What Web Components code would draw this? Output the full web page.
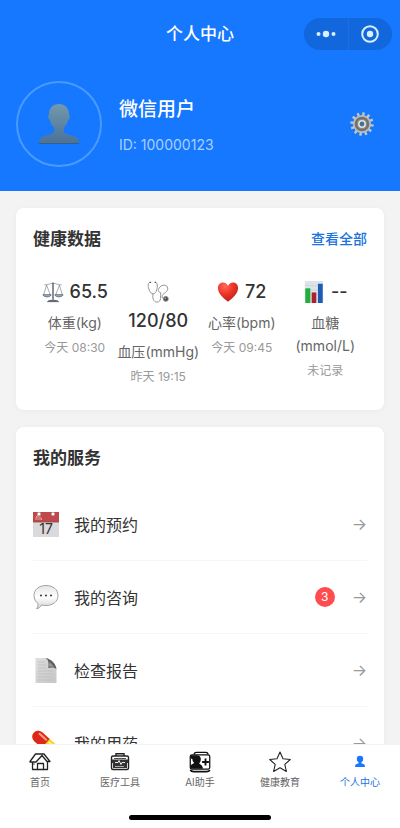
<!DOCTYPE html>
<html lang="zh-CN">
<head>
<meta charset="utf-8">
<meta name="viewport" content="width=device-width, initial-scale=1">
<title>个人中心</title>
<style>
  :root {
    --blue: #1677ff;
    --ink: #333;
    --ink-2: #666;
    --ink-3: #999;
    --line: #f5f5f5;
  }
  html, body { margin: 0; height: 100%; }
  body { font-family: Inter, "Noto Sans CJK SC", sans-serif; color: var(--ink); background: #f3f3f4; }
</style>
</head>
<body>
<profile-page>
  <nav-bar slot="top">个人中心</nav-bar>
  <user-header slot="top" uid="100000123">微信用户</user-header>

  <info-card heading="健康数据" more="查看全部">
    <metric-grid>
      <metric-item icon="scale" value="65.5" label="体重(kg)" time="今天 08:30"></metric-item>
      <metric-item icon="stethoscope" value="120/80" label="血压(mmHg)" time="昨天 19:15"></metric-item>
      <metric-item icon="heart" value="72" label="心率(bpm)" time="今天 09:45"></metric-item>
      <metric-item icon="chart" value="--" label="血糖(mmol/L)" time="未记录"></metric-item>
    </metric-grid>
  </info-card>

  <info-card heading="我的服务">
    <service-row icon="calendar">我的预约</service-row>
    <service-row icon="bubble" count="3">我的咨询</service-row>
    <service-row icon="report">检查报告</service-row>
    <service-row icon="pill">我的用药</service-row>
  </info-card>

  <tab-bar slot="bottom">
    <tab-item icon="home">首页</tab-item>
    <tab-item icon="kit">医疗工具</tab-item>
    <tab-item icon="assistant">AI助手</tab-item>
    <tab-item icon="star">健康教育</tab-item>
    <tab-item icon="person" current>个人中心</tab-item>
  </tab-bar>
</profile-page>

<script>
const ICONS = {
  avatar: `<svg viewBox="0 0 40 40"><defs><linearGradient id="g" x1="0" y1="0" x2="0" y2="1"><stop offset="0" stop-color="#7299ad"/><stop offset="1" stop-color="#4a7198"/></linearGradient></defs>
    <path fill="url(#g)" d="M20 0c-6 0-10 4-10 10 0 1-1 1-.8 3 .2 1.700 1 2.500 1.800 3 .6 3.500 2.200 6 4.200 7.500v4.200c-1.200 2.300-4 2.800-7.200 3.500C3.500 32.300 0 34 0 40h40c0-6-3.500-7.700-8-8.800-3.200-.7-6-1.200-7.200-3.500v-4.200c2-1.500 3.600-4 4.200-7.500.8-.5 1.600-1.300 1.800-3 .2-2-.8-2-.8-3 0-6-4-10-10-10z"/><path d="M0 39.500h40" stroke="#365f80"/></svg>`,
  gear: `<svg viewBox="0 0 24 24"><g stroke="#c3c7c9" stroke-width="2.400">${[0,30,60,90,120,150].map(a => `<path d="M12 .3v23.400" transform="rotate(${a + 8} 12 12)"/>`).join('')}</g>
    <circle cx="12" cy="12" r="8.200" fill="#77746b" stroke="#b9bcbc" stroke-width="1.800"/><circle cx="12" cy="12" r="5.800" fill="#8b8980" stroke="#6f6d67"/><circle cx="12" cy="12" r="3.200" fill="#4e7290" stroke="#dde1e3" stroke-width="1.600"/><circle cx="12" cy="12" r="1.300" fill="#2b6fc0"/></svg>`,
  scale: `<svg viewBox="0 0 24 24" fill="none" stroke="#5c6672" stroke-width="1"><path d="M12 1.500v19" stroke-width="1.600"/><path d="M2.500 4.200c4 .5 6-1.700 9.500-1.700s5.500 2.200 9.500 1.700M5 4.500 1.800 15M5 4.500 9 15M19 4.500 15 15M19 4.500 22.200 15" stroke-width=".6"/><path d="M1 15h9c-.8 3-8.200 3-9 0zM14 15h9c-.8 3-8.200 3-9 0z" fill="#aab8ca"/><path d="M6 22.500c1-2 11-2 12 0z" fill="#434b55"/></svg>`,
  stethoscope: `<svg viewBox="0 0 24 24" fill="none" stroke="#868b90" stroke-width="1"><path d="M3.200 1.500C.5 2 1 6.500 2.500 10c1 2.500 2.500 4 4.200 4s3.300-1.800 4-4.500C11.600 6 11.600 2 9.500 1.500M6.700 14c-1 4 0 9 4.300 9 5.500 0 3-7 4.200-10"/><path d="M15.200 13c-3.500-1-3.500-4-1-6.500 2.500-2.400 6.500-2.800 8 0 1.500 3-1 5.500-4 7.500-1.500 1-2.500 2.500-1 5"/><path d="M3 1.500h1.500M8.300 1.500h1.500" stroke="#555" stroke-width="1.600"/><circle cx="20.500" cy="19.500" r="2.700" fill="#464a4e" stroke="#888"/><circle cx="20" cy="19" r=".9" fill="#aaa" stroke="none"/></svg>`,
  heart: `<svg viewBox="0 0 24 24"><defs><radialGradient id="h" cx=".35" cy=".2" r=".85"><stop offset="0" stop-color="#ff6a5c"/><stop offset=".5" stop-color="#ed3326"/><stop offset="1" stop-color="#b8201b"/></radialGradient></defs><path fill="url(#h)" d="M12 22.500C8 19.500 1 14 1 7.500 1 3.800 3.500 1.500 6.500 1.500c2.500 0 4.500 1.400 5.500 4 1-2.600 3-4 5.500-4 3 0 5.500 2.300 5.500 6 0 6.500-7 12-11 15z"/></svg>`,
  chart: `<svg viewBox="0 0 24 24"><path fill="#dce4e9" d="M2 0h20v24H2z"/><path stroke="#c0ccd5" stroke-width=".6" d="M2 5h20M2 10h20M2 15h20M2 20h20"/><path fill="#1fb03a" d="M2.500 8h5.500v16H2.500z"/><path fill="#b01f2b" d="M9.500 12.500h5V24h-5z"/><path fill="#1f5ab4" d="M16.300 3h5.200v21h-5.200z"/></svg>`,
  calendar: `<svg viewBox="0 0 26 26"><path fill="#dadada" d="M0 1h26v25H0z"/><path fill="#c0484b" d="M0 1h26v10H0z"/><path d="M0 11h26" stroke="#9b4343" stroke-width=".8"/><path d="M3 9V6l2-2v5M7 5v4M8.500 7v2" stroke="#e3a5a2" fill="none"/><g fill="#fff" stroke="#a9a0a0" stroke-width=".5"><circle cx="6" cy="3" r="1.700"/><circle cx="20" cy="3" r="1.700"/></g><text x="13" y="23" text-anchor="middle" font-family="Inter" font-size="14" fill="#333">17</text></svg>`,
  bubble: `<svg viewBox="0 0 26 26"><defs><linearGradient id="b" x1="0" y1="0" x2="0" y2="1"><stop offset="0" stop-color="#e4e4e4"/><stop offset=".5" stop-color="#fff"/><stop offset="1" stop-color="#d2d2d2"/></linearGradient></defs><path fill="url(#b)" stroke="#a2a2a2" d="M13 1.500c7 0 12 4 12 10s-5 10-12 10c-1.700 0-3-.2-4.300-.6-1 1.900-2.700 3.600-5.200 3.800 1.200-1.500 1.700-3.200 1.500-5.200-2.500-1.800-4-4.500-4-8 0-6 5-10 12-10z"/><g fill="#444"><circle cx="8" cy="11.500" r="1.100"/><circle cx="13" cy="11.500" r="1.100"/><circle cx="18" cy="11.500" r="1.100"/></g></svg>`,
  report: `<svg viewBox="0 0 26 26"><defs><linearGradient id="r" x1="0" y1="0" x2="1" y2="1"><stop offset="0" stop-color="#dedede"/><stop offset="1" stop-color="#c6c6c6"/></linearGradient></defs><path fill="url(#r)" d="M2.500 1H14l9.500 10v15h-21z"/><path stroke="#bababa" stroke-width=".7" d="M5 5h7M5 8h8M5 11h8M5 14h15M5 17h15M5 20h15M5 23h15"/><path fill="#606060" d="M12.500 1c3 1.500 3.500 5 2.800 10 3.200-1 6.700-.5 8.200 1C23 7 18.500 2 12.500 1z"/><path fill="#999" d="M15.800 9.500 16.600 5l4.400 4.800z"/></svg>`,
  pill: `<svg viewBox="0 0 26 26"><g transform="rotate(42 13 13)"><rect x="-3" y="7.500" width="32" height="12" rx="6" fill="#f8d21c"/><path fill="#db2a1d" d="M13 7.500H3a6 6 0 0 0 0 12h10z"/><path stroke="#ff9a83" stroke-width="2" stroke-linecap="round" d="M2 10.500h9"/><path stroke="#fff389" stroke-width="2" stroke-linecap="round" d="M15 10.500h9"/></g></svg>`,
  home: `<svg viewBox="0 0 22 22" fill="none" stroke="#222" stroke-width="1.300" stroke-linejoin="round"><path d="M1 10.500 6.500 3H15l6 7.500h-3l-5-6-6 6.500H1zM3.500 11v7.500h5M18.500 10.500v8h-4"/><path d="M8.500 18.500v-6h6v6z"/><path d="M3.500 13H6" stroke-width=".8"/></svg>`,
  kit: `<svg viewBox="0 0 22 22" fill="none" stroke="#222" stroke-width="1.400"><path d="M7 5V2.700h8V5" /><rect x="2.500" y="5" width="17" height="13.500" rx="1.500"/><path fill="#333" stroke="none" d="M3 8.500h16v3.500H18v5H4v-5H3z"/><path d="M5 7.500h12" stroke-width=".8"/><path d="M6 11.500h3l1-2 2 4 1-2h3" stroke="#fff" stroke-width=".9"/><path d="M6 15.500h9" stroke="#ccc" stroke-width=".8"/></svg>`,
  assistant: `<svg viewBox="0 0 26 26"><path d="M6 4.500C6 2 7 1.500 9 1.500h11c2 0 2.500 1 2.500 3" fill="none" stroke="#111" stroke-width="1.500"/><rect x="1.500" y="4.500" width="23" height="17" rx="2" fill="#fff" stroke="#111" stroke-width="1.500"/><path fill="#111" d="M2 5h7c3.200 0 5 1.500 5 4.500 0 2.300-.8 4-2 5 1 1.800 4 1.500 4.500 6.500H2V17c1-1.500 3.500-1.500 4-3-1.200-1-2-2.500-2-4.500L2 9z"/><path stroke="#111" stroke-width="2.200" d="M19.500 9v8M15.500 13h8"/><path d="M1.500 22.500c1 1.500 2 1.800 4 1.800h15c2 0 3.500-.3 4-1.800" fill="none" stroke="#111" stroke-width="2"/></svg>`,
  star: `<svg viewBox="0 0 22 22" fill="none" stroke="#222" stroke-width="1.100" stroke-linejoin="round"><path d="M11 1 14 7.700 21.300 8.500 15.800 13.300 17.400 20.500 11 16.800 4.600 20.500 6.200 13.300.7 8.500 8 7.700z"/></svg>`,
  person: `<svg viewBox="0 0 22 22" fill="#1677ff"><circle cx="11" cy="8" r="3.200"/><path d="M9.500 10.500h3v2c2.500.3 3.500 1 3.500 3.500H6c0-2.500 1-3.200 3.500-3.500z"/></svg>`,
};

const define = (name, css, html) => customElements.define(name, class extends HTMLElement {
  connectedCallback() {
    if (this.shadowRoot) return;
    const root = this.attachShadow({ mode: 'open' });
    const attr = key => this.getAttribute(key) ?? '';
    root.innerHTML = `<style>*{box-sizing:border-box}button{font:inherit;color:inherit;background:none;border:0;padding:0;cursor:pointer}${css}</style>${html(attr, this)}`;
  }
});

define('ui-icon', `:host{display:inline-block;flex:none;width:24px;height:24px}svg{display:block;width:100%;height:100%;overflow:visible}`,
  a => ICONS[a('name')].replace('<svg ', '<svg aria-hidden="true" '));

define('profile-page', `
  :host{display:flex;flex-direction:column;height:100vh}
  header{flex:none;background:var(--blue);padding-bottom:24px}
  main{flex:1;min-height:0;overflow-y:auto;scrollbar-width:none;display:flex;flex-direction:column;gap:17px;padding:17px 16px}`,
  () => `<header><slot name="top"></slot></header><main><slot></slot></main><slot name="bottom"></slot>`);

define('nav-bar', `
  :host{display:grid;grid-template-columns:1fr auto 1fr;align-items:center;padding:18px 8px 0;color:#fff}
  h1{grid-column:2;margin:0;font-size:17px;line-height:32px;font-weight:500}
  .capsule{justify-self:end;display:flex;align-items:center;width:88px;height:32px;border-radius:16px;background:#1267dc}
  button{flex:1;height:32px;display:grid;place-items:center}
  button+button{border-left:1px solid #1d6ee0}
  svg{width:20px;height:20px;fill:#d6f0ff}`,
  () => `<h1><slot></slot></h1><div class="capsule">
    <button aria-label="更多"><svg viewBox="0 0 20 20"><circle cx="2.500" cy="10" r="2"/><circle cx="10" cy="10" r="3.200"/><circle cx="17.500" cy="10" r="2"/></svg></button>
    <button aria-label="关闭"><svg viewBox="0 0 20 20"><circle cx="10" cy="10" r="7.800" fill="none" stroke="#d6f0ff" stroke-width="2"/><circle cx="10" cy="10" r="3.200"/></svg></button></div>`);

define('user-header', `
  :host{display:flex;align-items:center;gap:17px;padding:31px 26px 0 16px;color:#fff}
  .avatar{width:86px;height:86px;border-radius:50%;border:2px solid #4a9bff;display:grid;place-items:center}
  .avatar ui-icon{width:40px;height:40px}
  .text{flex:1;display:flex;flex-direction:column;gap:10px;padding-top:4px}
  h2{margin:0;font-size:19px;line-height:28px;font-weight:500}
  p{margin:0;font-size:14px;line-height:22px;color:#a9d0ff}
  button{display:block}
  button ui-icon{display:block}`,
  a => `<div class="avatar"><ui-icon name="avatar"></ui-icon></div>
    <div class="text"><h2><slot></slot></h2><p>ID: ${a('uid')}</p></div>
    <button aria-label="设置"><ui-icon name="gear"></ui-icon></button>`);

define('info-card', `
  :host{display:block;flex:none;background:#fff;border-radius:8px;padding:17px 17px 16px;box-shadow:0 1px 6px rgba(0,0,0,.04)}
  header{display:flex;justify-content:space-between;align-items:center}
  h2{margin:0;font-size:17px;line-height:28px;font-weight:600}
  a{font-size:14px;line-height:28px;font-weight:500;color:#1a73e0;text-decoration:none}`,
  a => `<header><h2>${a('heading')}</h2>${a('more') ? `<a href="#all">${a('more')}</a>` : ''}</header><slot></slot>`);

define('metric-grid', `:host{display:grid;grid-template-columns:repeat(4,minmax(0,1fr));padding:24px 0 7px}`, () => `<slot></slot>`);

define('metric-item', `
  :host{display:flex;flex-direction:column;text-align:center}
  .value{display:flex;flex-wrap:wrap;justify-content:center;column-gap:6px;font-size:18px;line-height:29px;font-weight:500}
  .value ui-icon{width:22px;height:22px;margin:4px 0 3px}
  .label{margin-top:5px;font-size:14px;line-height:23px;color:var(--ink-2)}
  .time{margin-top:4px;font-size:12px;line-height:20px;color:var(--ink-3)}`,
  a => `<div class="value"><ui-icon name="${a('icon')}"></ui-icon><span>${a('value')}</span></div>
    <div class="label">${a('label').replace('(', '<wbr>(')}</div><div class="time">${a('time')}</div>`);

define('service-row', `
  :host{display:block;border-bottom:1px solid var(--line)}
  :host(:first-of-type){margin-top:16px}
  :host(:last-of-type){border-bottom:0}
  button{width:100%;height:72px;display:flex;align-items:center;text-align:left;font-size:16px}
  ui-icon{width:26px;height:26px;margin-right:15px}
  .name{flex:1}
  .badge{min-width:20px;height:20px;border-radius:10px;background:#ff4d4f;color:#fff;font-size:12px;line-height:20px;text-align:center;margin-right:17px}
  .arrow{color:var(--ink-3);line-height:20px}`,
  a => `<button><ui-icon name="${a('icon')}"></ui-icon><span class="name"><slot></slot></span>
    ${a('count') ? `<span class="badge">${a('count')}</span>` : ''}<span class="arrow">→</span></button>`);

define('tab-bar', `
  :host{display:block;flex:none;background:#fff;border-top:1px solid #f3f3f3}
  nav{display:flex}
  .indicator{width:142px;height:5px;border-radius:3px;background:#000;margin:25px auto 8px}`,
  () => `<nav><slot></slot></nav><div class="indicator"></div>`);

define('tab-item', `
  :host{flex:1;color:#666}
  :host([current]){color:#1a73e0}
  button{width:100%;display:flex;flex-direction:column;align-items:center;padding-top:5px;font-size:10px;line-height:16px}
  ui-icon{width:22px;height:24px}`,
  (a, el) => `<button${el.hasAttribute('current') ? ' aria-current="page"' : ''}><ui-icon name="${a('icon')}"></ui-icon><slot></slot></button>`);
</script>
</body>
</html>
